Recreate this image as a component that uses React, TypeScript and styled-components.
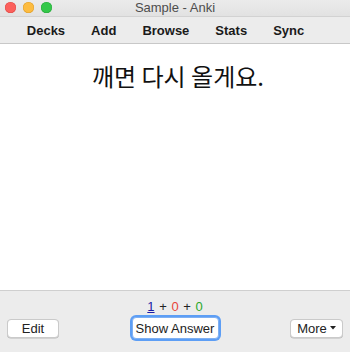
import React from 'react';
import styled, { createGlobalStyle } from 'styled-components';

const Global = createGlobalStyle`
  html, body { margin: 0; padding: 0; }
  *, *::before, *::after { box-sizing: border-box; }
  body {
    width: 350px;
    height: 352px;
    overflow: hidden;
    font-family: "Liberation Sans", Arial, sans-serif;
    background: #ffffff;
  }
`;

const Window = styled.div`
  width: 350px;
  height: 352px;
  display: flex;
  flex-direction: column;
`;

const TitleBar = styled.div`
  height: 17px;
  flex: none;
  position: relative;
  display: flex;
  align-items: center;
  justify-content: center;
  background: linear-gradient(#ebebeb, #e2e2e2);
  border-bottom: 1px solid #d2d2d2;
`;

const Lights = styled.div`
  position: absolute;
  left: 5px;
  top: 2px;
  display: flex;
  gap: 7px;
`;

const Light = styled.span<{ $c: string; $b: string }>`
  width: 11px;
  height: 11px;
  border-radius: 50%;
  background: ${(p) => p.$c};
  box-shadow: inset 0 0 0 0.5px ${(p) => p.$b};
`;

const Title = styled.div`
  font-size: 13px;
  color: #4d4d4d;
  margin-top: -1px;
`;

const Toolbar = styled.div`
  height: 27px;
  flex: none;
  display: flex;
  align-items: center;
  justify-content: center;
  gap: 26px;
  background: #ececec;
  border-bottom: 1px solid #c8c8c8;
  padding: 1px 19px 0 0;
`;

const ToolItem = styled.span`
  font-size: 13px;
  font-weight: bold;
  color: #1a1a1a;
`;

const Content = styled.div`
  flex: 1;
  background: #ffffff;
  display: flex;
  justify-content: center;
  padding: 17px 0 0 6px;
`;

const Question = styled.div`
  font-family: "Noto Sans CJK KR", sans-serif;
  font-size: 24px;
  line-height: 30px;
  color: #111;
`;

const BottomBar = styled.div`
  height: 62px;
  flex: none;
  background: #ececec;
  border-top: 1px solid #cfcfcf;
  display: flex;
  flex-direction: column;
  gap: 1px;
  padding: 8px 7px 0 7px;
`;

const Counts = styled.div`
  height: 15px;
  line-height: 15px;
  text-align: center;
  font-size: 13px;
  color: #222;
  word-spacing: 1px;
`;

const Num = styled.span<{ $c: string; $u?: boolean }>`
  color: ${(p) => p.$c};
  text-decoration: ${(p) => (p.$u ? 'underline' : 'none')};
`;

const ButtonRow = styled.div`
  height: 26px;
  display: grid;
  grid-template-columns: 1fr auto 1fr;
  align-items: center;
`;

const Button = styled.button<{ $focus?: boolean; $w: number }>`
  width: ${(p) => p.$w}px;
  height: ${(p) => (p.$focus ? 22 : 19)}px;
  padding: 0;
  font-family: "Liberation Sans", Arial, sans-serif;
  font-size: 13px;
  color: #222;
  background: #ffffff;
  border: 1px solid ${(p) => (p.$focus ? '#7fb0f2' : '#cacaca')};
  border-radius: 4px;
  display: flex;
  align-items: center;
  justify-content: center;
  gap: 3px;
  box-shadow: ${(p) => (p.$focus ? '0 0 0 2px #5d9ef5' : '0 0.5px 0 #b8b8b8')};
`;

const Left = styled.div`
  display: flex;
  justify-content: flex-start;
`;

const Right = styled.div`
  display: flex;
  justify-content: flex-end;
`;

export default function App() {
  return (
    <>
      <Global />
      <Window>
        <TitleBar>
          <Lights>
            <Light $c="#fc605c" $b="#de4a45" />
            <Light $c="#fdbc40" $b="#de9e2a" />
            <Light $c="#34c84a" $b="#27a83a" />
          </Lights>
          <Title>Sample - Anki</Title>
        </TitleBar>
        <Toolbar>
          <ToolItem>Decks</ToolItem>
          <ToolItem>Add</ToolItem>
          <ToolItem>Browse</ToolItem>
          <ToolItem>Stats</ToolItem>
          <ToolItem>Sync</ToolItem>
        </Toolbar>
        <Content>
          <Question>깨면 다시 올게요.</Question>
        </Content>
        <BottomBar>
          <Counts>
            <Num $c="#1a1aa6" $u>1</Num> + <Num $c="#e8463a">0</Num> + <Num $c="#2aa82a">0</Num>
          </Counts>
          <ButtonRow>
            <Left>
              <Button $w={52}>Edit</Button>
            </Left>
            <Button $w={87} $focus>Show Answer</Button>
            <Right>
              <Button $w={53}>
                More
                <svg width="6" height="4" viewBox="0 0 6 4">
                  <path d="M0 0 L6 0 L3 3.5 Z" fill="#222" />
                </svg>
              </Button>
            </Right>
          </ButtonRow>
        </BottomBar>
      </Window>
    </>
  );
}
